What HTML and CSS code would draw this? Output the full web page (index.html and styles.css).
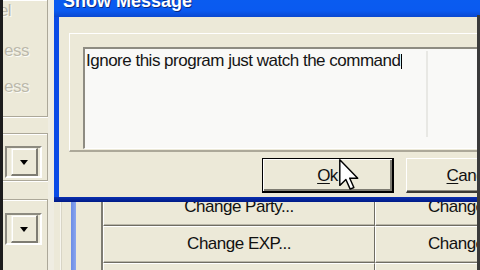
FILE: index.html
```html
<!DOCTYPE html>
<html>
<head>
<meta charset="utf-8">
<link rel="stylesheet" href="styles.css">
</head>
<body>
<div class="app">
  <div class="edge"></div>
  <div class="side">
    <div class="panel p1">
      <div class="lbl l0">Level</div>
      <div class="lbl l1">ess</div>
      <div class="lbl l2">ess</div>
    </div>
    <div class="panel p2">
      <div class="combo"><div class="field"></div><div class="drop"><i class="tri"></i></div></div>
    </div>
    <div class="panel p3">
      <div class="combo"><div class="field"></div><div class="drop"><i class="tri"></i></div></div>
    </div>
  </div>
  <div class="gutter"></div>
  <div class="main">
    <div class="rail-line"></div>
    <div class="rail-blue"></div>
    <div class="grid">
      <div class="cell c1">Change Party...</div>
      <div class="cell c2">Change Gold...</div>
      <div class="cell c1">Change EXP...</div>
      <div class="cell c2">Change Items...</div>
      <div class="cell c1">Change Skills...</div>
      <div class="cell c2">Change Stats...</div>
    </div>
  </div>
</div>

<div class="dialog">
  <div class="titlebar"><span class="title">Show Message</span></div>
  <div class="dbody">
    <div class="group">
      <div class="textarea">
        <div class="text">Ignore this program just watch the command<i class="caret"></i></div>
        <div class="vline"></div>
      </div>
    </div>
    <div class="buttons">
      <div class="btn default"><span><u>O</u>k</span></div>
      <div class="btn"><span><u>C</u>ancel</span></div>
    </div>
  </div>
</div>

<svg class="cursor" width="20" height="32" viewBox="0 0 12.5 20">
  <path d="M0.5 0.5 L0.5 16.5 L4.3 12.8 L7 18.8 L9.3 17.8 L6.7 12 L11.7 12 Z" fill="#fff" stroke="#000" stroke-width="0.9" stroke-linejoin="round"/>
</svg>
<div class="scan-edge"></div>
</body>
</html>
```

FILE: styles.css
```css
* { box-sizing: border-box; }
html, body { margin: 0; padding: 0; }
body {
  width: 480px;
  height: 270px;
  overflow: hidden;
  position: relative;
  background: #ece9d8;
  font-family: "Liberation Sans", Arial, sans-serif;
  font-size: 17px;
  letter-spacing: -0.5px;
  color: #111;
}
.app { display: flex; height: 270px; }
.edge { width: 3px; background: #1c1c1c; flex: none; }
.side { width: 45px; flex: none; display: flex; flex-direction: column; overflow: hidden; }
.panel {
  margin-left: -6px;
  border: 1px solid #aca899;
  box-shadow: inset 1px 1px 0 #fff, 1px 1px 0 #fff;
  flex: none;
}
.p1 { height: 117px; border-top: none; padding-top: 1px; }
.p2 { margin-top: 16px; height: 48px; padding-top: 12px; }
.p3 { margin-top: 18px; height: 90px; padding-top: 13px; }
.lbl {
  line-height: 20px;
  height: 20px;
  white-space: nowrap;
  color: #bcb9ab;
  text-shadow: 1px 1px 0 #fbfbf6;
  padding-left: 6px;
}
.l0 { margin-left: -31px; }
.l1 { margin-top: 20px; }
.l2 { margin-top: 16px; }
.combo {
  display: flex;
  width: 37px;
  margin-left: 7px;
  height: 32px;
  border: 2px solid;
  border-color: #8d8b80 #fff #fff #8d8b80;
}
.field { width: 4px; background: #ece9d8; }
.drop {
  width: 27px;
  display: flex;
  align-items: center;
  justify-content: center;
  background: #ece9d8;
  border-top: 1px solid #f4f3ea;
  border-left: 1px solid #f4f3ea;
  border-right: 2px solid #7e7c72;
  border-bottom: 2px solid #7e7c72;
  box-shadow: inset 1px 1px 0 #fff;
}
.tri {
  width: 0; height: 0;
  border-left: 4.5px solid transparent;
  border-right: 4.5px solid transparent;
  border-top: 5px solid #000;
  margin-top: 1px;
}
.gutter { width: 6px; flex: none; background: #efede2; }
.main { flex: 1; display: flex; min-width: 0; }
.rail-line {
  width: 2px; flex: none; margin-left: 6px;
  background: #f7f6ef;
  border-right: 1px solid #d8d5c6;
}
.rail-blue {
  width: 5px; flex: none; margin-left: 9px;
  background: linear-gradient(to right, #6a8ce6, #8aa6ee);
}
.grid {
  margin-left: 25px;
  flex: none;
  border-left: 2px solid #7e7c72;
  padding-top: 189px;
  display: grid;
  grid-template-columns: 272px 214px;
  grid-auto-rows: 37px;
  align-content: start;
}
.cell {
  border-top: 1px solid #fff;
  border-left: 1px solid #fff;
  border-right: 1px solid #6f6d63;
  border-bottom: 1px solid #6f6d63;
  box-shadow: inset 0 -1px 0 #b9b6a8;
  background: #ece9d8;
  line-height: 34px;
  white-space: nowrap;
  overflow: hidden;
}
.c1 { text-align: center; }
.c2 { padding-left: 52px; }

.dialog {
  position: absolute;
  left: 54px;
  top: -14px;
  width: 440px;
  height: 216px;
  display: flex;
  flex-direction: column;
  background: #0a46d8;
  border-left: 5px solid;
  border-image: linear-gradient(to right, #0b4be6, #0d55f0 60%, #4f86f3) 1;
  border-top: none; border-right: none; border-bottom: none;
}
.dialog::after {
  content: "";
  position: absolute;
  left: -5px; right: 0; bottom: 0;
  height: 5px;
  background: linear-gradient(to bottom, #0a2fb0, #001a86);
}
.titlebar {
  height: 31px;
  flex: none;
  margin-left: -5px;
  padding-left: 9px;
  background: linear-gradient(to bottom, #0a5ef0 0%, #0a5af0 80%, #0a48d0 100%);
  color: #fff;
  font-weight: bold;
  font-size: 18px;
  letter-spacing: 0;
  line-height: 1;
  padding-top: 6px;
  white-space: nowrap;
}
.title { text-shadow: 1px 1px 0 #0a2a80; }
.dbody {
  flex: 1;
  background: #ece9d8;
  padding: 16px 0 0 10px;
  margin-bottom: 5px;
}
.group {
  border-top: 1px solid #fff;
  border-left: 1px solid #fff;
  border-bottom: 2px solid #aca899;
  padding: 13px 0 1px 13px;
}
.textarea {
  height: 102px;
  display: flex;
  background: #f9f9f7;
  border-top: 2px solid #8e8c82;
  border-left: 2px solid #8e8c82;
  border-bottom: 1px solid #fff;
}
.text {
  width: 341px;
  flex: none;
  padding: 2px 0 0 1px;
  line-height: 20px;
  white-space: nowrap;
  color: #151515;
}
.caret {
  display: inline-block;
  width: 1px;
  height: 15px;
  margin-left: 1px;
  background: #000;
  vertical-align: -3px;
}
.vline {
  width: 2px;
  height: 86px;
  margin-top: 2px;
  background: #e8e8e4;
  flex: none;
}
.buttons {
  display: flex;
  gap: 12px;
  margin-top: 6px;
  padding-left: 193px;
}
.btn {
  width: 132px;
  height: 35px;
  flex: none;
  display: flex;
  align-items: center;
  justify-content: center;
  background: #ece9d8;
  border-top: 1px solid #fff;
  border-left: 1px solid #fff;
  border-right: 2px solid #3a3a36;
  border-bottom: 2px solid #3a3a36;
  box-shadow: inset -1px -1px 0 #8e8c82;
  padding-top: 1px;
}
.btn.default {
  border: 1px solid #000;
  border-right-width: 2px;
  border-bottom-width: 2px;
  box-shadow: inset 1px 1px 0 #fff, inset -2px -2px 0 #7e7c72;
}
.btn u { text-underline-offset: 2px; }
.cursor { position: absolute; left: 339px; top: 159px; }
.scan-edge {
  position: absolute;
  right: 0; top: 15px; bottom: 0;
  width: 3px;
  background: #3a3a3a;
}
```
